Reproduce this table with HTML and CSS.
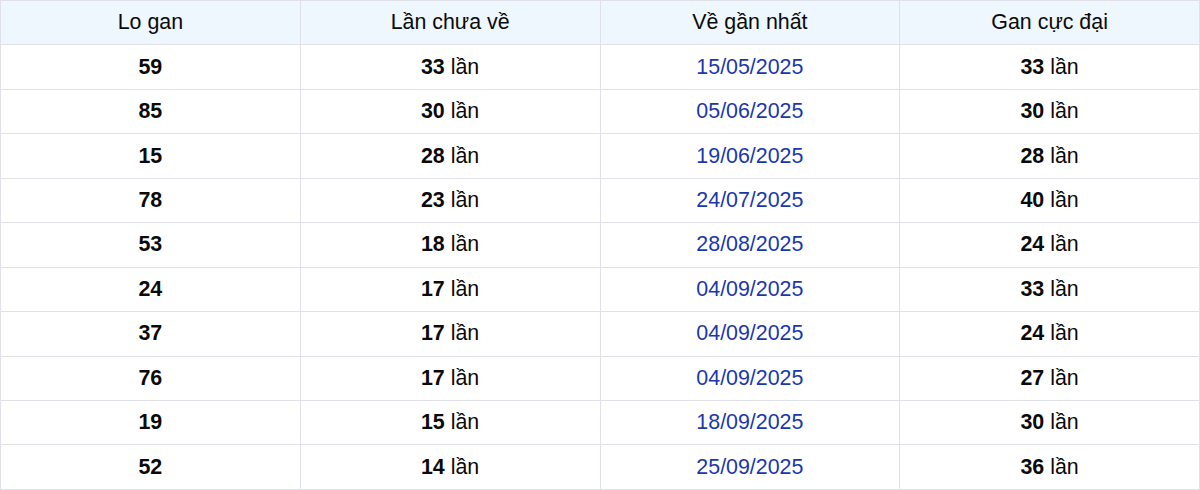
FILE: index.html
```html
<!DOCTYPE html>
<html>
<head>
<meta charset="utf-8">
<link rel="stylesheet" href="styles.css">
</head>
<body>
<table class="gan">
  <thead>
    <tr><th>Lo gan</th><th>Lần chưa về</th><th>Về gần nhất</th><th>Gan cực đại</th></tr>
  </thead>
  <tbody>
    <tr><td><b>59</b></td><td><b>33</b> lần</td><td class="date">15/05/2025</td><td><b>33</b> lần</td></tr>
    <tr><td><b>85</b></td><td><b>30</b> lần</td><td class="date">05/06/2025</td><td><b>30</b> lần</td></tr>
    <tr><td><b>15</b></td><td><b>28</b> lần</td><td class="date">19/06/2025</td><td><b>28</b> lần</td></tr>
    <tr><td><b>78</b></td><td><b>23</b> lần</td><td class="date">24/07/2025</td><td><b>40</b> lần</td></tr>
    <tr><td><b>53</b></td><td><b>18</b> lần</td><td class="date">28/08/2025</td><td><b>24</b> lần</td></tr>
    <tr><td><b>24</b></td><td><b>17</b> lần</td><td class="date">04/09/2025</td><td><b>33</b> lần</td></tr>
    <tr><td><b>37</b></td><td><b>17</b> lần</td><td class="date">04/09/2025</td><td><b>24</b> lần</td></tr>
    <tr><td><b>76</b></td><td><b>17</b> lần</td><td class="date">04/09/2025</td><td><b>27</b> lần</td></tr>
    <tr><td><b>19</b></td><td><b>15</b> lần</td><td class="date">18/09/2025</td><td><b>30</b> lần</td></tr>
    <tr><td><b>52</b></td><td><b>14</b> lần</td><td class="date">25/09/2025</td><td><b>36</b> lần</td></tr>
  </tbody>
</table>
</body>
</html>
```
FILE: styles.css
```css
html, body {
  margin: 0;
  padding: 0;
  background: #ffffff;
}
body {
  font-family: "Liberation Sans", Arial, sans-serif;
  color: #0a0a0a;
}
.gan {
  width: 1200px;
  border-collapse: collapse;
  table-layout: fixed;
  font-size: 21.4px;
}
.gan th, .gan td {
  border: 1.5px solid #e0e1e8;
  height: 43.45px;
  padding: 0;
  text-align: center;
  vertical-align: middle;
}
.gan th {
  background: #eef6fe;
  font-weight: normal;
  color: #0a0a0a;
}
.gan b {
  font-weight: bold;
}
.gan .date {
  color: #1a37ad;
}
```
